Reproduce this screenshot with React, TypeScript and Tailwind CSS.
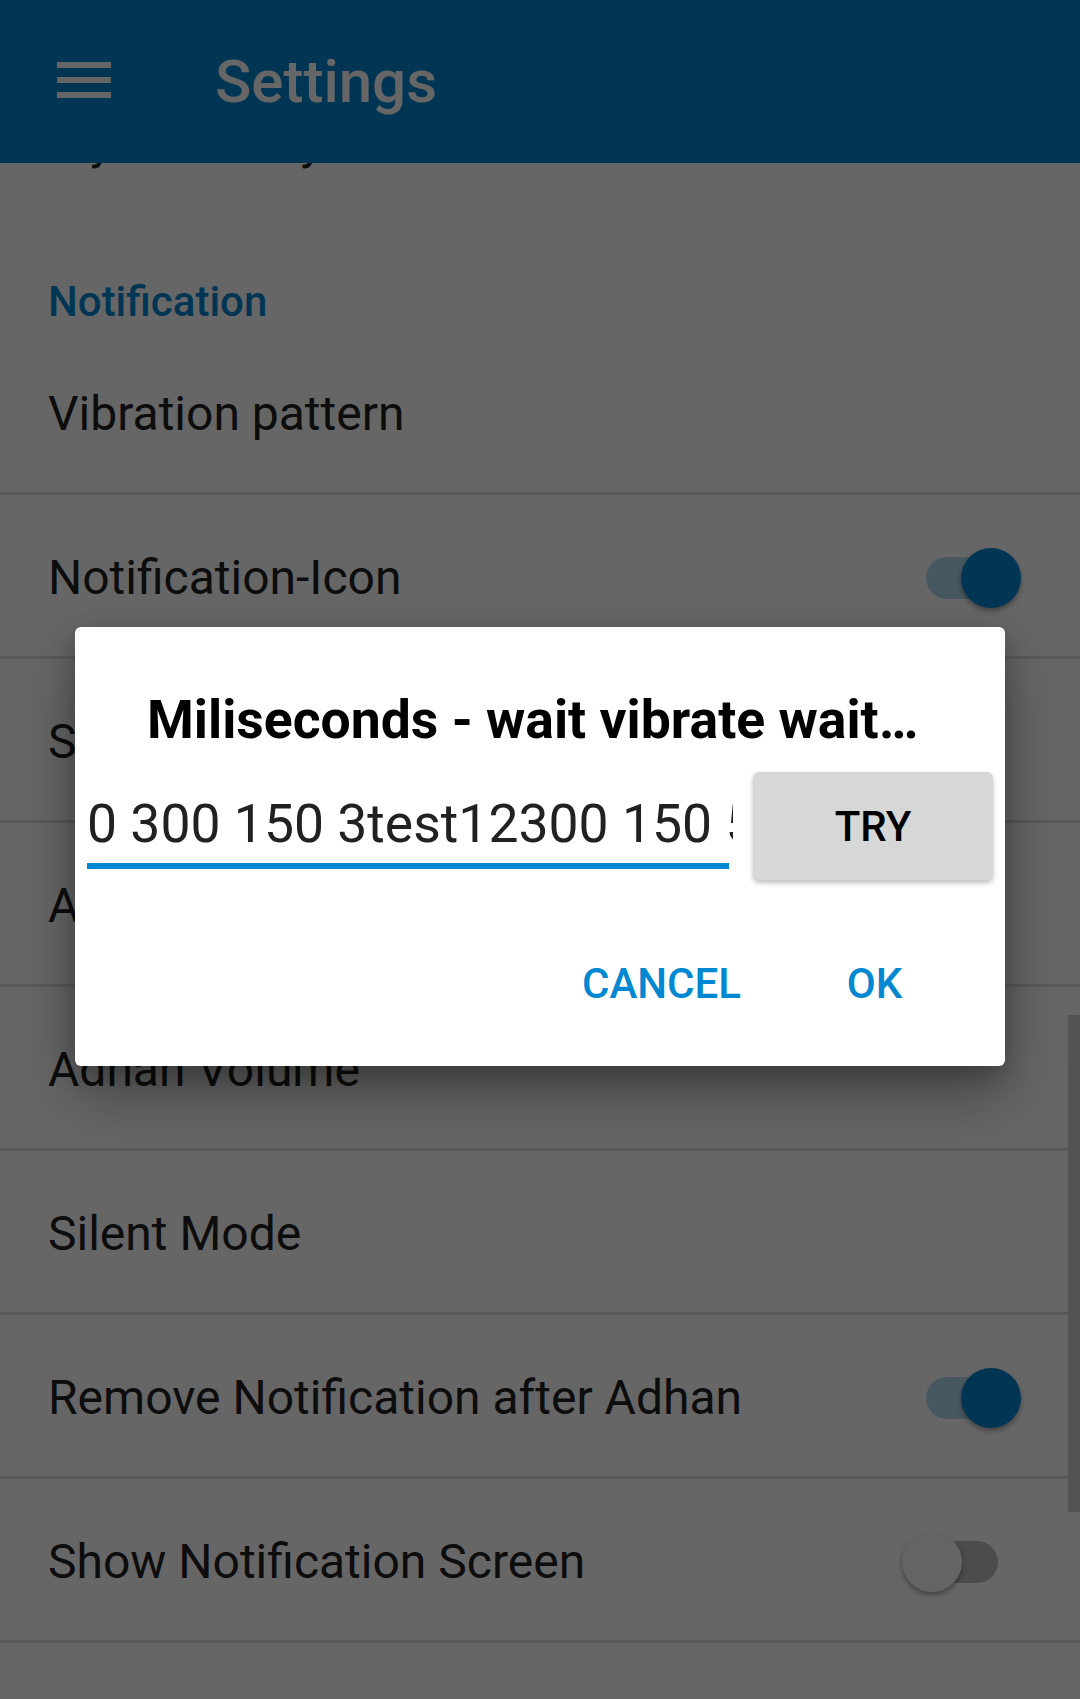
import React from 'react';

const Toggle: React.FC<{ on?: boolean }> = ({ on }) => (
  <div className="relative w-[120px] h-[60px] shrink-0 ml-auto mr-[58px]">
    <div
      className={
        on
          ? 'absolute left-[24px] top-[9px] w-[72px] h-[42px] rounded-full bg-[#b3dbf1]'
          : 'absolute left-[24px] top-[9px] w-[72px] h-[42px] rounded-full bg-[#bdbdbd]'
      }
    />
    <div
      className={
        on
          ? 'absolute left-[59px] top-0 w-[60px] h-[60px] rounded-full bg-[#0288d1] shadow-[0_3px_5px_rgba(0,0,0,0.35)]'
          : 'absolute left-0 top-0 w-[60px] h-[60px] rounded-full bg-[#fafafa] shadow-[0_3px_5px_rgba(0,0,0,0.35)]'
      }
    />
  </div>
);

const Row: React.FC<{ title: string; toggle?: 'on' | 'off'; border?: boolean }> = ({ title, toggle, border = true }) => (
  <div
    className={
      border
        ? 'h-[164px] shrink-0 flex items-center pt-1 border-b-[3px] border-[#e1e1e1]'
        : 'h-[161px] shrink-0 flex items-center pt-1'
    }
  >
    <span className="pl-12 text-[48px] leading-[56px] text-[#212121] whitespace-nowrap">{title}</span>
    {toggle && <Toggle on={toggle === 'on'} />}
  </div>
);

const App: React.FC = () => {
  return (
    <div className="relative w-[1080px] h-[1699px] overflow-hidden bg-white font-['Roboto',sans-serif]">
      <div className="flex flex-col h-full">
        {/* App bar */}
        <div className="h-[163px] shrink-0 bg-[#0288d1] flex items-center">
          <svg className="ml-[57px] -mt-[3px]" width="54" height="36" viewBox="0 0 54 36">
            <rect x="0" y="0" width="54" height="6" fill="#fff" />
            <rect x="0" y="15" width="54" height="6" fill="#fff" />
            <rect x="0" y="30" width="54" height="6" fill="#fff" />
          </svg>
          <h1 className="ml-[104px] text-[60px] leading-[70px] font-medium text-white">Settings</h1>
        </div>

        {/* Preference list, scrolled */}
        <div className="flex-1 overflow-hidden">
          <div className="-mt-[104px] flex flex-col">
            <Row title="My Adhan by Time" border={false} />
            <div className="h-[111px] flex items-end pb-[8px] pl-[48px]">
              <span className="text-[42px] leading-none font-medium text-[#0288d1]">Notification</span>
            </div>
            <Row title="Vibration pattern" />
            <Row title="Notification-Icon" toggle="on" />
            <Row title="Sound" />
            <Row title="Alternative Player" />
            <Row title="Adhan Volume" />
            <Row title="Silent Mode" />
            <Row title="Remove Notification after Adhan" toggle="on" />
            <Row title="Show Notification Screen" toggle="off" />
            <Row title="Ongoing Notification" toggle="off" />
          </div>
        </div>
      </div>

      {/* Scrollbar */}
      <div className="absolute right-0 top-[1015px] w-[12px] h-[497px] bg-[#d0d0d0]" />

      {/* Scrim */}
      <div className="absolute inset-0 bg-black/60" />

      {/* Dialog */}
      <div className="absolute left-[75px] top-[627px] w-[930px] h-[439px] bg-white rounded-[6px] shadow-[0_30px_60px_rgba(0,0,0,0.3),0_10px_24px_rgba(0,0,0,0.22)] flex flex-col">
        <div className="pt-[61px] pl-[72px] pr-[60px]">
          <h2 className="text-[53.5px] leading-[63px] font-bold text-black whitespace-nowrap">Miliseconds - wait vibrate wait…</h2>
        </div>

        <div className="mt-[21px] flex items-start pl-[12px]">
          <div className="w-[642px] pt-[20px]">
            <div className="w-[646px] overflow-hidden whitespace-nowrap text-[53.5px] leading-[63px] text-[#212121]">
              0 300 150 3test12300 150 500 150
            </div>
            <div className="mt-[8px] h-[6px] bg-[#0288d1]" />
          </div>
          <button className="ml-[24px] w-[240px] h-[108px] rounded-[6px] bg-[#d6d7d7] shadow-[0_3px_5px_rgba(0,0,0,0.25)] flex items-center justify-center text-[42px] font-medium text-black">
            TRY
          </button>
        </div>

        <div className="mt-[49px] flex justify-end pr-[24px]">
          <button className="w-[213px] h-[108px] flex items-center justify-center text-[42px] font-medium text-[#0288d1]">
            CANCEL
          </button>
          <button className="w-[213px] h-[108px] flex items-center justify-center text-[42px] font-medium text-[#0288d1]">
            OK
          </button>
        </div>
      </div>
    </div>
  );
};

export default App;
